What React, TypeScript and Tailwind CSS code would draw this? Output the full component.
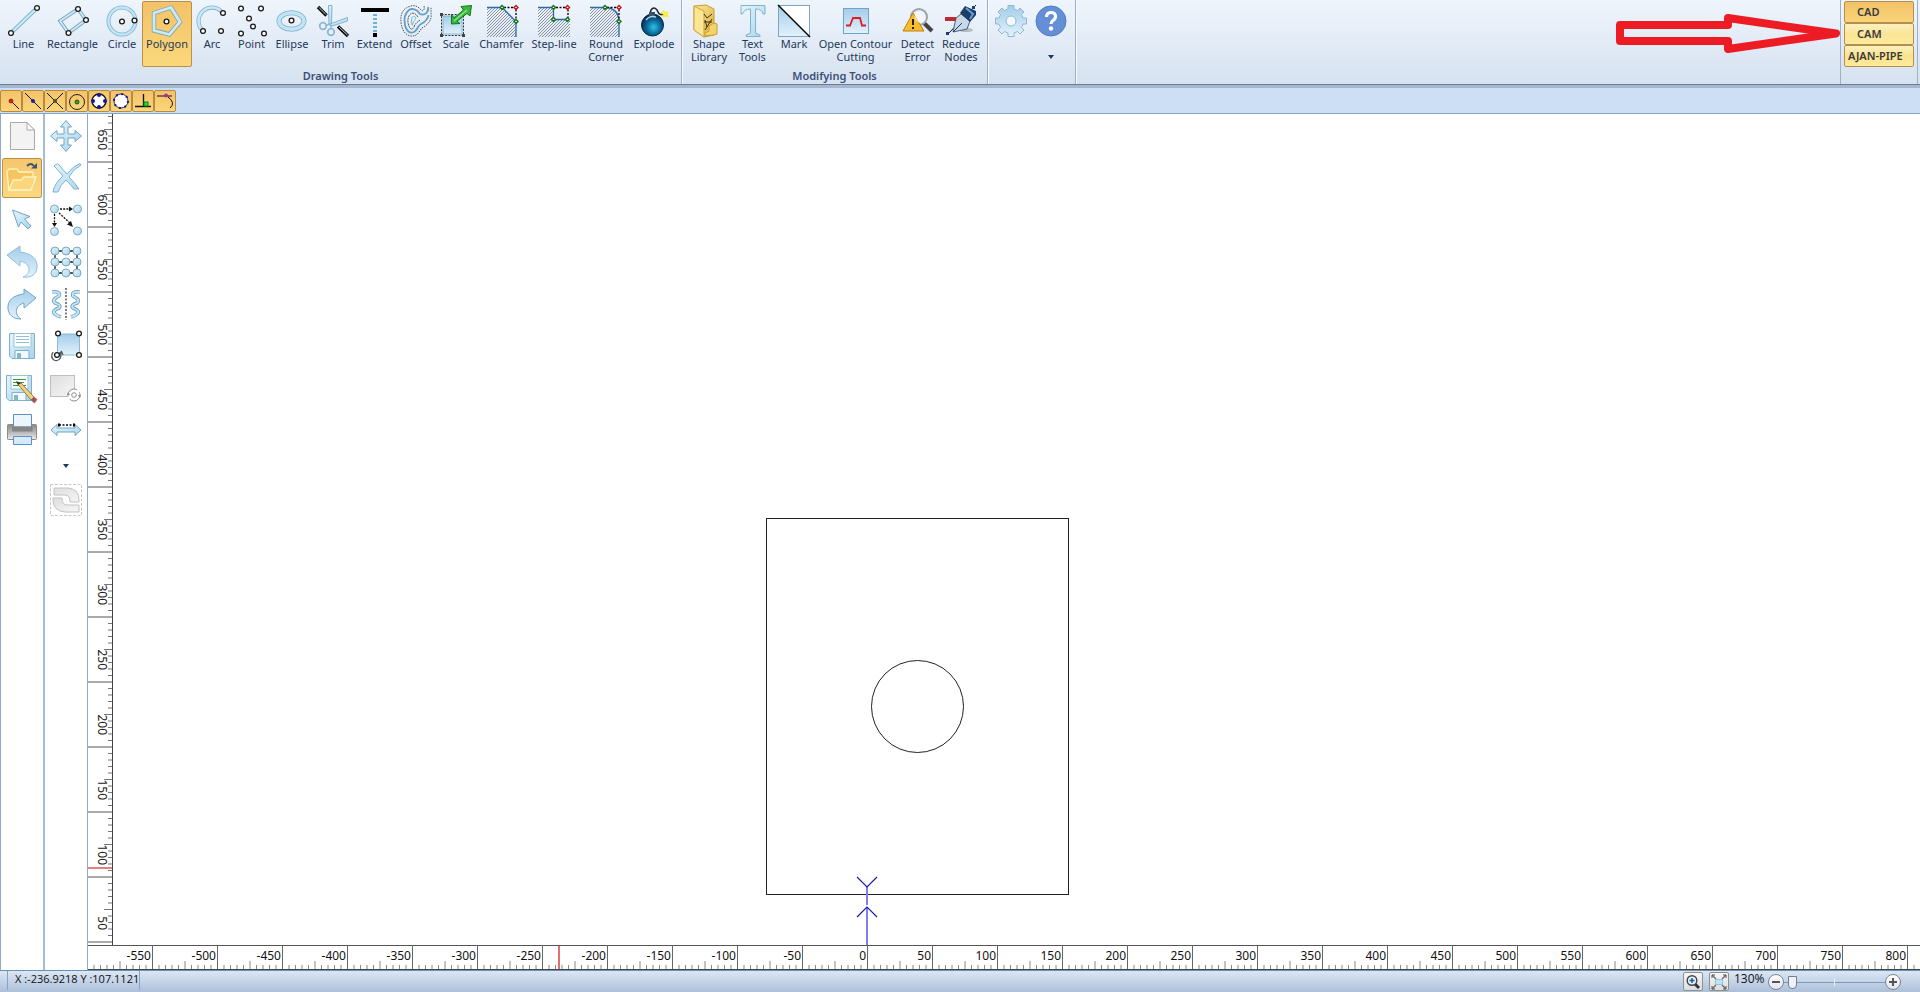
import React from "react";

type Kids = { children: React.ReactNode };

const EDGE = "#7fb4cf";
const BLUE = "url(#blue)";

function Icon({ children }: Kids) {
  return (
    <svg width="32" height="32" viewBox="0 0 32 32" fill="none" aria-hidden="true" className="block shrink-0 overflow-visible">
      {children}
    </svg>
  );
}

function Node({ x, y, r = 2.4 }: { x: number; y: number; r?: number }) {
  return <circle cx={x} cy={y} r={r} fill="#fff" stroke="#1a1a1a" strokeWidth="1.3" />;
}

function Dot({ x, y, color }: { x: number; y: number; color: string }) {
  return <path d={`M${x - 2} ${y}L${x} ${y - 2}L${x + 2} ${y}L${x} ${y + 2}Z`} fill="#fff" stroke={color} strokeWidth="1.4" />;
}

function Defs() {
  return (
    <svg width="0" height="0" className="absolute" aria-hidden="true">
      <defs>
        <linearGradient id="blue" x1="0" y1="0" x2="1" y2="1">
          <stop offset="0" stopColor="#e6f5fc" />
          <stop offset="1" stopColor="#a9d4ec" />
        </linearGradient>
        <linearGradient id="blueDown" x1="0" y1="0" x2="0" y2="1">
          <stop offset="0" stopColor="#a3cdea" />
          <stop offset="1" stopColor="#e2f2fb" />
        </linearGradient>
        <linearGradient id="gray" x1="0" y1="0" x2="1" y2="1">
          <stop offset="0" stopColor="#dedede" />
          <stop offset="1" stopColor="#f6f6f6" />
        </linearGradient>
        <linearGradient id="gold" x1="0" y1="0" x2="1" y2="1">
          <stop offset="0" stopColor="#fdeb9a" />
          <stop offset="1" stopColor="#dcae3c" />
        </linearGradient>
        <linearGradient id="metal" x1="0" y1="0" x2="0" y2="1">
          <stop offset="0" stopColor="#8a8a8a" />
          <stop offset="0.5" stopColor="#b5b5b5" />
          <stop offset="1" stopColor="#ececec" />
        </linearGradient>
        <radialGradient id="bomb" cx="0.55" cy="0.6" r="0.6">
          <stop offset="0" stopColor="#2fc3e6" />
          <stop offset="0.5" stopColor="#0b6e9e" />
          <stop offset="1" stopColor="#0a2346" />
        </radialGradient>
        <pattern id="hatch" width="3" height="3" patternUnits="userSpaceOnUse">
          <path d="M0 3L3 0M-1 1L1 -1M2 4L4 2" stroke="#5b6674" strokeWidth="0.7" />
        </pattern>
      </defs>
    </svg>
  );
}

const drawing = {
  line: (
    <Icon>
      <path d="M4 27L28 4" stroke={EDGE} strokeWidth="4" />
      <path d="M4 27L28 4" stroke="#cfe9f6" strokeWidth="2" />
      <Node x={3} y={28} /><Node x={29} y={3} />
    </Icon>
  ),
  rectangle: (
    <Icon>
      <path d="M21 4L29 15L11.500 28L3 16Z" stroke="#77a5bf" strokeWidth="3.600" />
      <path d="M21 4L29 15L11.500 28L3 16Z" stroke="#cfe9f6" strokeWidth="1.800" />
      <Node x={21} y={4} /><Node x={29} y={15} /><Node x={11.5} y={28} />
    </Icon>
  ),
  circle: (
    <Icon>
      <circle cx="16" cy="16" r="13.500" stroke={EDGE} strokeWidth="4" />
      <circle cx="16" cy="16" r="13.500" stroke="#c3e4f5" strokeWidth="2.400" />
      <Node x={16} y={16.5} /><Node x={28.5} y={15.5} />
    </Icon>
  ),
  polygon: (
    <Icon>
      <path d="M20 2.500L29 17L18.500 29.500L3 25.500V8Z" stroke="#7ba6ae" strokeWidth="4.400" />
      <path d="M20 2.500L29 17L18.500 29.500L3 25.500V8Z" stroke="#cdeaf3" strokeWidth="2.800" />
      <Node x={15.5} y={16.5} />
    </Icon>
  ),
  arc: (
    <Icon>
      <path d="M6 25A13 13 0 0 1 26 7" stroke={EDGE} strokeWidth="4.200" />
      <path d="M6 25A13 13 0 0 1 26 7" stroke="#c9e7f6" strokeWidth="2.600" />
      <Node x={27} y={8} /><Node x={7} y={26} /><Node x={25} y={26} />
    </Icon>
  ),
  point: (
    <Icon>
      <Node x={5} y={3.5} /><Node x={25} y={3.5} /><Node x={13} y={13.5} /><Node x={17} y={21.5} /><Node x={5} y={28.5} /><Node x={28} y={28.5} />
    </Icon>
  ),
  ellipse: (
    <Icon>
      <ellipse cx="15.500" cy="16" rx="12.500" ry="8.300" stroke={EDGE} strokeWidth="5" />
      <ellipse cx="15.500" cy="16" rx="12.500" ry="8.300" stroke="#c3e4f5" strokeWidth="3.400" />
      <Node x={15.5} y={15.5} />
    </Icon>
  ),
  trim: (
    <Icon>
      <path d="M1 2L9.500 10.500M21 21.500L31 31" stroke="#111" strokeWidth="3.400" />
      <path d="M2 2.500L9 9.500M22 22L30.500 30" stroke="#c9c9c9" strokeWidth="1" />
      <path d="M11.500 0.500H15L14.500 20H12Z" fill={BLUE} stroke={EDGE} />
      <path d="M30.500 12.500V16L15 21L13 19Z" fill={BLUE} stroke={EDGE} />
      <circle cx="6" cy="21" r="3.300" stroke="#8fbad2" strokeWidth="1.800" />
      <circle cx="14" cy="27" r="3.300" stroke="#8fbad2" strokeWidth="1.800" />
      <path d="M9.500 20.500L13 18.500L14.500 23" stroke="#8fbad2" strokeWidth="1.500" />
    </Icon>
  ),
  extend: (
    <Icon>
      <path d="M2 3H30V7H2Z" fill="#000" />
      <path d="M16 9V27" stroke="#6fb4d6" strokeWidth="4" strokeDasharray="2 2" />
      <path d="M14 28H18V32H14Z" fill="#000" />
    </Icon>
  ),
  offset: (
    <Icon>
      <path d="M24 1C25 5 23 7 21 5C18 1 14 0 11 1C3 3 0 9 1 17C2 26 6 31 12 31C18 31 19 26 22 23C27 20 32 16 31 9V2" stroke="#555" strokeDasharray="1.500 1" />
      <path d="M28 2C29 7 25 11 20 9C17 4 12 3 9 5C4 9 4 15 5 20C6 26 10 29 14 27C18 25 17 21 21 19C25 17 28 14 28.500 10" stroke="#5f9fca" strokeWidth="1.800" />
      <path d="M18 12C15 7 11 7 9 11C7 15 8 19 9 21C10 25 13 25 14 22C15 18 18 17 20 15" stroke="#555" strokeDasharray="2 0.700" />
      <path d="M16 13C14 10 12 11 11.500 15C11 20 12 22 13 18C13.500 16 15 15 16 13Z" stroke="#78b4d8" />
    </Icon>
  ),
  scale: (
    <Icon>
      <rect x="3" y="11" width="19" height="18" fill="url(#blueDown)" stroke="#7fb4d8" />
      <rect x="1.500" y="9.500" width="22" height="21" stroke="#333" strokeDasharray="2 1.300" />
      <path d="M0 8H3V11H0ZM0 29H3V32H0ZM22 29H25V32H22Z" fill="#444" />
      <path d="M31.500 0.500L30 11L27 8.500L17 16L20 18.500L11.500 19V9.500L14 13L23.500 5L21 1.500Z" fill="#37b93c" stroke="#14761b" />
      <path d="M14 16L27 5" stroke="#8fe58b" strokeWidth="1.300" />
    </Icon>
  ),
  chamfer: (
    <Icon>
      <path d="M1 3H16L30 17V32H1Z" fill="url(#hatch)" />
      <path d="M1 2.500H16L30 16.500V32" stroke="#2f68ae" strokeWidth="1.300" />
      <path d="M18 2.500H30V15" stroke="#000" strokeWidth="1.300" strokeDasharray="2 1.500" />
      <Dot x={16} y={2.5} color="#16711c" /><Dot x={30} y={16.5} color="#16711c" /><Dot x={30} y={2.5} color="#c8141c" />
    </Icon>
  ),
  step: (
    <Icon>
      <path d="M0 3H15V15H32V32H0Z" fill="url(#hatch)" />
      <path d="M0 2.500H15.500V14.500H30" stroke="#2f68ae" strokeWidth="1.300" />
      <path d="M18 2.500H30V14" stroke="#000" strokeWidth="1.300" strokeDasharray="2 1.500" />
      <Dot x={15.5} y={2.5} color="#16711c" /><Dot x={15.5} y={14.5} color="#16711c" /><Dot x={29.5} y={14.5} color="#16711c" /><Dot x={29.5} y={2.5} color="#c8141c" />
    </Icon>
  ),
  round: (
    <Icon>
      <path d="M0 3H15Q29 4 29 17V32H0Z" fill="url(#hatch)" />
      <path d="M0 2.500H15Q29 3 29 17V32" stroke="#2f68ae" strokeWidth="1.300" />
      <path d="M17 2.500H29V15" stroke="#000" strokeWidth="1.300" strokeDasharray="2 1.500" />
      <Dot x={15} y={2.5} color="#16711c" /><Dot x={29} y={16.5} color="#16711c" /><Dot x={29} y={2.5} color="#c8141c" />
    </Icon>
  ),
  explode: (
    <Icon>
      <path d="M12 9L13 5C16 1 19 4 20 7C21 10 24 10 26 9" stroke="#222" strokeWidth="1.500" />
      <circle cx="14.500" cy="20" r="11" fill="url(#bomb)" stroke="#0a2a4d" />
      <path d="M11 7H17V11H11Z" fill="#33506b" />
      <path d="M8 15Q12 10 18 12" stroke="#a8d5e8" strokeWidth="1.500" />
      <path d="M26 6L27.500 8L30 7L29 9.500L30 12L27.500 11L25 12L25.500 9.500L23.500 8Z" fill="#fff23a" stroke="#f6e92c" />
    </Icon>
  ),
};

const modifying = {
  shape: (
    <Icon>
      <path d="M1 1L13 0L21 4V30L11 32L1 25Z" fill="url(#gold)" stroke="#c79c35" />
      <path d="M1 1L11 6V32L1 25Z" fill="#fbe792" stroke="#cda53f" />
      <path d="M21 18L24 19V29L21 30L12 31V28L16 26V21Z" fill="#f3d36a" stroke="#c79c35" />
      <path d="M11 9L14 13L19 9M11 17H19M14 22L12 15M19 14L12 25" stroke="#3a2f12" />
    </Icon>
  ),
  text: (
    <Icon>
      <path d="M4 0.500H28V9H26Q25 4 18.500 4V28L23 30V31.500H9V30L13.500 28V4Q7 4 5.500 9H4Z" fill={BLUE} stroke={EDGE} />
    </Icon>
  ),
  mark: (
    <Icon>
      <rect x="0.500" y="0.500" width="31" height="31" fill="#fff" />
      <path d="M0.500 0.500L31.500 31.500H0.500Z" fill="url(#blueDown)" />
      <rect x="0.500" y="0.500" width="31" height="31" stroke="#7fa5c4" />
      <path d="M0 0L32 32" stroke="#000" strokeWidth="1.500" />
    </Icon>
  ),
  contour: (
    <Icon>
      <rect x="3.500" y="3.500" width="25" height="25" fill="url(#blueDown)" stroke="#6ba5cc" />
      <path d="M6 20.500H10L13 13H20L22 20.500H26" stroke="#e01b22" strokeWidth="1.800" />
    </Icon>
  ),
  detect: (
    <Icon>
      <path d="M22 18L30 26" stroke="#444" strokeWidth="4" />
      <circle cx="17" cy="12" r="8" fill="#e3ecf3" fillOpacity="0.800" stroke="#9ba4ad" strokeWidth="2" />
      <path d="M11 8L22 26H1Z" fill="#f9bd2c" stroke="#c47d12" strokeLinejoin="round" />
      <path d="M11 14V20M11 22V24" stroke="#222" strokeWidth="2" />
      <circle cx="18" cy="12" r="5.500" fill="#fff" fillOpacity="0.550" />
    </Icon>
  ),
  reduce: (
    <Icon>
      <path d="M2 30L31 0" stroke="#111" />
      <ellipse cx="21" cy="25" rx="7" ry="2" fill="#999" fillOpacity="0.600" />
      <path d="M16 9L25 16L22 24L8 27L11 13Z" fill="#c8d8e6" stroke="#46627c" />
      <path d="M8 27L17 18" stroke="#223d5c" />
      <path d="M15 8L20 1L31 6V10L25 17Z" fill="#1d3e66" />
      <path d="M21 3L28 9L25 14" stroke="#5aa4d8" strokeWidth="2" />
      <path d="M0 12H11V16H0Z" fill="#bd2a30" />
      <rect x="1" y="27" width="3" height="3" fill="#183c86" /><rect x="27" y="1" width="3" height="3" fill="#183c86" />
    </Icon>
  ),
};

const gear = (
  <Icon>
    <path
      d="M13 0.500H19V4L22.500 5.500L25 3L29 7L26.500 9.500L28 13H31.500V19H28L26.500 22.500L29 25L25 29L22.500 26.500L19 28V31.500H13V28L9.500 26.500L7 29L3 25L5.500 22.500L4 19H0.500V13H4L5.500 9.500L3 7L7 3L9.500 5.500L13 4Z"
      fill="url(#blueDown)" stroke="#8fb9d2" strokeLinejoin="round"
    />
    <circle cx="16" cy="16" r="5" fill="#f4f9fd" stroke="#8fb9d2" />
  </Icon>
);

const help = (
  <Icon>
    <circle cx="16" cy="16" r="15" fill="#648fd6" stroke="#4f7cc6" />
    <path d="M11.500 12Q11.500 7.500 16 7.500Q20.500 7.500 20.500 11.500Q20.500 14 18 15.500Q16 16.800 16 19" stroke="#fff" strokeWidth="3.200" />
    <circle cx="16" cy="23.500" r="2.200" fill="#fff" />
  </Icon>
);

function Tool({ icon, label, width, active, menu, name }: { icon: React.ReactNode; label?: string; width: string; active?: boolean; menu?: boolean; name?: string }) {
  return (
    <button
      type="button"
      aria-label={name}
      aria-pressed={active ? true : undefined}
      className={`${width} flex h-[66px] shrink-0 flex-col items-center rounded-[2px] border text-[11px] leading-[13px] text-[#1e395b] ${active ? "border-[#bf8f45] bg-linear-to-b from-[#f3c268] to-[#fbd87c]" : "border-transparent"}`}
    >
      <span className="mt-[3px] block">{icon}</span>
      {label && <span className="whitespace-pre-line text-center">{label}</span>}
      {menu && <svg width="6" height="4" viewBox="0 0 6 4" className="mt-[18px]" aria-hidden="true"><path d="M0 0H6L3 4Z" fill="#1e395b" /></svg>}
    </button>
  );
}

function Group({ title, children, pad }: Kids & { title?: string; pad: string }) {
  return (
    <section aria-label={title ?? "Options"} className="flex shrink-0 flex-col border-r border-[#9db0c8] shadow-[1px_0_0_#f7fbff]">
      <div className={`flex pt-px ${pad}`}>{children}</div>
      {title && <h2 className="text-center text-[11px] leading-[17px] font-semibold text-[#3c4f78]">{title}</h2>}
    </section>
  );
}

const modes = [
  { label: "CAD", pad: "pl-3", look: "bg-linear-to-b from-[#f2c268] to-[#fad57a]" },
  { label: "CAM", pad: "pl-3", look: "bg-linear-to-b from-[#fdf1c0] via-[#fae596] to-[#fcec9c]" },
  { label: "AJAN-PIPE", pad: "pl-[3px]", look: "bg-linear-to-b from-[#fdf1c0] via-[#fae28c] to-[#fcec9c]" },
];

function Ribbon() {
  return (
    <header className="flex h-[85px] shrink-0 border-b border-[#6f7d92] bg-linear-to-b from-[#eff5fc] to-[#d6e2f0]">
      <Group title="Drawing Tools" pad="px-1">
        <Tool icon={drawing.line} label="Line" width="w-[39px]" />
        <Tool icon={drawing.rectangle} label="Rectangle" width="w-[59px]" />
        <Tool icon={drawing.circle} label="Circle" width="w-[40px]" />
        <Tool icon={drawing.polygon} label="Polygon" width="w-[50px]" active />
        <Tool icon={drawing.arc} label="Arc" width="w-[40px]" />
        <Tool icon={drawing.point} label="Point" width="w-[39px]" />
        <Tool icon={drawing.ellipse} label="Ellipse" width="w-[42px]" />
        <Tool icon={drawing.trim} label="Trim" width="w-[40px]" />
        <Tool icon={drawing.extend} label="Extend" width="w-[43px]" />
        <Tool icon={drawing.offset} label="Offset" width="w-[40px]" />
        <Tool icon={drawing.scale} label="Scale" width="w-[40px]" />
        <Tool icon={drawing.chamfer} label="Chamfer" width="w-[51px]" />
        <Tool icon={drawing.step} label="Step-line" width="w-[54px]" />
        <Tool icon={drawing.round} label={"Round\nCorner"} width="w-[50px]" />
        <Tool icon={drawing.explode} label="Explode" width="w-[46px]" />
      </Group>
      <Group title="Modifying Tools" pad="pl-[5px] pr-[3px]">
        <Tool icon={modifying.shape} label={"Shape\nLibrary"} width="w-[44px]" />
        <Tool icon={modifying.text} label={"Text\nTools"} width="w-[43px]" />
        <Tool icon={modifying.mark} label="Mark" width="w-[40px]" />
        <Tool icon={modifying.contour} label={"Open Contour\nCutting"} width="w-[83px]" />
        <Tool icon={modifying.detect} label={"Detect\nError"} width="w-[41px]" />
        <Tool icon={modifying.reduce} label={"Reduce\nNodes"} width="w-[46px]" />
      </Group>
      <Group pad="pl-[3px] pr-1">
        <Tool icon={gear} name="Settings" width="w-[40px]" />
        <Tool icon={help} name="Help" width="w-[40px]" menu />
      </Group>
      <svg width="226" height="68" viewBox="0 0 226 68" fill="none" className="ml-auto shrink-0" aria-hidden="true">
        <path d="M6 25H114V18L222 33.500L114 49V41H6Z" stroke="#ed1c24" strokeWidth="8" strokeLinejoin="round" />
      </svg>
      <nav aria-label="Mode" className="mr-[2px] flex w-[78px] shrink-0 flex-col border-x border-[#9db0c8] px-[3px] pt-px">
        {modes.map((m) => (
          <button key={m.label} type="button" className={`${m.pad} ${m.look} h-[22px] rounded-[2px] border border-[#b98d4c] text-left text-[11px] leading-5 font-semibold whitespace-nowrap text-[#3a3a3a]`}>
            {m.label}
          </button>
        ))}
      </nav>
    </header>
  );
}

const snaps: { name: string; art: React.ReactNode }[] = [
  { name: "End point", art: <><path d="M10 10L18 18" stroke="#111" /><circle cx="10" cy="10" r="2" fill="#d8201c" stroke="#701" strokeWidth="0.600" /></> },
  { name: "Mid point", art: <><path d="M2 2L18 18" stroke="#111" /><circle cx="10" cy="10" r="2" fill="#1a1f9c" /></> },
  { name: "Intersection", art: <><path d="M2 2L18 18M18 2L2 18" stroke="#111" /><circle cx="10" cy="10" r="2" fill="#4b5a10" /></> },
  { name: "Center", art: <><circle cx="10" cy="11" r="7.500" stroke="#222" /><circle cx="10" cy="11" r="2" fill="#17b52b" stroke="#111" strokeWidth="0.700" /></> },
  {
    name: "Quadrant",
    art: <>
      <circle cx="10" cy="10" r="7" fill="#fff" stroke="#111" strokeWidth="1.300" />
      <circle cx="10" cy="4" r="2" fill="#1216a8" /><circle cx="10" cy="16" r="2" fill="#1216a8" /><circle cx="4" cy="10" r="2" fill="#1216a8" /><circle cx="16" cy="10" r="2" fill="#1216a8" />
    </>,
  },
  { name: "On circle", art: <><circle cx="10" cy="10" r="7" fill="#fff" stroke="#333" /><circle cx="10" cy="10" r="7" stroke="#1216a8" strokeWidth="2" strokeDasharray="2 3.500" /></> },
  { name: "Perpendicular", art: <><path d="M2 15.500H18M10.500 3V15" stroke="#111" strokeWidth="1.300" /><rect x="11" y="11" width="4" height="4" fill="#25e035" stroke="#0a7a16" /></> },
  { name: "Tangent", art: <><path d="M2 5H17M13 6Q21 12 15 17" stroke="#111" /><circle cx="11" cy="4.500" r="2" fill="#b52a9a" /></> },
];

function SnapBar() {
  return (
    <div role="toolbar" aria-label="Snaps" className="flex h-[29px] shrink-0 border-t-[3px] border-b border-t-[#a5b6cf] border-b-[#87a5c6] bg-[#cddff5] pt-[2px]">
      {snaps.map((s) => (
        <button key={s.name} type="button" aria-label={s.name} aria-pressed className="flex size-[22px] items-center justify-center rounded-[2px] border border-[#b98842] bg-linear-to-b from-[#f4c368] to-[#fbd67a]">
          <svg width="20" height="20" viewBox="0 0 20 20" fill="none" aria-hidden="true">{s.art}</svg>
        </button>
      ))}
    </div>
  );
}

const floppy = (
  <>
    <path d="M3.500 3.500H28.500V28.500H6L3.500 26Z" fill={BLUE} stroke="#7fb0cc" />
    <path d="M8 3.500H25V17H8Z" fill="#fff" stroke="#9fc4d8" />
    <path d="M9 20.500H23V28.500H9Z" fill="#f2f8fb" stroke="#7fb0cc" />
    <path d="M11 23H15V28H11Z" fill="#86b7c8" />
  </>
);

const fileTools: { name: string; active?: boolean; art: React.ReactNode }[] = [
  { name: "New", art: <><path d="M4.500 2.500H21L28.500 10V29.500H4.500Z" fill="#f3f3f3" stroke="#a9a9a9" /><path d="M21 2.500V10H28.500Z" fill="#fff" stroke="#a9a9a9" /></> },
  {
    name: "Open", active: true,
    art: <>
      <path d="M1 10L3 7H11L13 10H27V15L23 28H3Z" fill="#f6c55f" stroke="#fff2c4" strokeWidth="1.300" />
      <path d="M3 28L7 18H15L18 15H30L25 28Z" fill="#fbd77b" stroke="#fff2c4" strokeWidth="1.300" />
      <path d="M21 4Q25 0 28 4" stroke="#3a5470" strokeWidth="1.800" /><path d="M25 6.500H31V1Z" fill="#3a5470" />
    </>,
  },
  { name: "Select", art: <path d="M6.500 6L24 12.500L18.500 15L25 22L22 25L15 18L12.500 23Z" fill={BLUE} stroke="#6fa6c6" /> },
  { name: "Undo", art: <path d="M1 9L14 0V6C26 7 32 14 31 22C30 28 26 32 17 31C26 28 25 17 14 15V20Z" fill="url(#blueDown)" stroke="#8fc1de" /> },
  { name: "Redo", art: <path d="M30 10L18 1V6C7 7 1 13 2 21C3 27 7 31 15 31C8 27 9 17 18 15V20Z" fill="url(#blueDown)" stroke="#6fa6c6" /> },
  { name: "Save", art: <>{floppy}<path d="M10 6.500H23M10 9.500H23M10 12.500H23" stroke="#8fbfe0" /></> },
  {
    name: "Save as",
    art: <>
      <g transform="translate(-3 0)">{floppy}</g>
      <path d="M7 7.500H20M7 10.500H18M7 13.500H20" stroke="#2f9e3a" strokeWidth="1.200" />
      <path d="M11 11L15 11L28 25L25 28Z" fill="#f3d27a" stroke="#8a7335" strokeWidth="0.900" />
      <path d="M25 28L28 25L31 27.500L28.500 31Z" fill="#b9474e" stroke="#777" strokeWidth="0.800" /><path d="M10 9L15 11L12 13Z" fill="#333" />
    </>,
  },
  {
    name: "Print",
    art: <>
      <rect x="1.500" y="10.500" width="29" height="15" rx="1" fill="url(#metal)" stroke="#8a8a8a" />
      <path d="M7.500 0.500H25.500V13H7.500Z" fill="#eaf5fd" stroke="#5d8fc0" /><path d="M6 12.500H26.500V17.500H6Z" fill="#858585" />
      <path d="M7.500 22.500H25.500V30.500H7.500Z" fill="#d5eafa" stroke="#5d8fc0" />
    </>,
  },
];

function Ball({ x, y }: { x: number; y: number }) {
  return <circle cx={x} cy={y} r="4" fill={BLUE} stroke="#7aa9c6" />;
}

const editTools: { name: string; menu?: boolean; art: React.ReactNode }[] = [
  { name: "Move", art: <path d="M16 0.500L21.500 7H18V14H25V10.500L31.500 16L25 21.500V18H18V25H21.500L16 31.500L10.500 25H14V18H7V21.500L0.500 16L7 10.500V14H14V7H10.500Z" fill={BLUE} stroke="#6fa6c6" /> },
  { name: "Delete", art: <path d="M4 4Q8 0 10 4Q14 9 17 12Q23 4 30 1.500L31 3Q23 7 19 15Q25 21 29 27L24 27Q20 22 16 18Q10 23 8 30H3Q4 22 13 14Q8 8 4 4Z" fill={BLUE} stroke="#7db3d3" /> },
  {
    name: "Copy",
    art: <>
      <path d="M10 5H20M4.500 10V20M9 9L20 19" stroke="#111" strokeWidth="1.300" strokeDasharray="2 1.200" />
      <path d="M19 2.500L23 5L19 7.500ZM2 19H7L4.500 23ZM21 17L23 23L17 20.500Z" fill="#111" />
      <Ball x={4.5} y={5} /><Ball x={27.5} y={5} /><Ball x={4.5} y={27.5} /><Ball x={27.5} y={27} />
    </>,
  },
  {
    name: "Array",
    art: <>
      <path d="M5 5H27V27H5ZM5 16H27" stroke="#111" strokeWidth="1.300" />
      {[5, 16, 27].map((y) => [5, 16, 27].map((x) => <Ball key={`${x}-${y}`} x={x} y={y} />))}
    </>,
  },
  {
    name: "Mirror",
    art: <>
      <path d="M16 0V32" stroke="#000" strokeDasharray="2 1.500" />
      <path d="M2 4Q11 3 9 8Q1 12 5 15Q12 17 9 20Q1 23 5 26Q7 28 11 29M30 4Q21 3 23 8Q31 12 27 15Q20 17 23 20Q31 23 27 26Q25 28 21 29" stroke="#6fa6c6" strokeWidth="3.600" />
      <path d="M2 4Q11 3 9 8Q1 12 5 15Q12 17 9 20Q1 23 5 26Q7 28 11 29M30 4Q21 3 23 8Q31 12 27 15Q20 17 23 20Q31 23 27 26Q25 28 21 29" stroke="#cae6f6" strokeWidth="1.800" />
    </>,
  },
  {
    name: "Rotate",
    art: <>
      <rect x="7.500" y="4" width="22" height="21" fill="url(#blueDown)" stroke="#8fb8d6" />
      <path d="M3 22Q0 27 4 30Q8 32 10.500 28L11 23M8.500 24L11.500 21.500L13 25" stroke="#555" strokeWidth="1.300" />
      <Node x={8} y={3.5} /><Node x={29} y={3.5} /><Node x={7} y={25} /><Node x={29} y={25} />
    </>,
  },
  {
    name: "Rotate free",
    art: <>
      <rect x="0.500" y="3.500" width="24" height="21" fill="url(#gray)" stroke="#bdbdbd" />
      <circle cx="24" cy="23" r="6" fill="#fff" stroke="#8c8c8c" strokeDasharray="14 3" /><circle cx="24" cy="23" r="2.300" stroke="#8c8c8c" /><path d="M17 23H20L18 20ZM31 23H28L30 26Z" fill="#8c8c8c" />
    </>,
  },
  {
    name: "Measure", menu: true,
    art: <>
      <path d="M1 16L7 10.500V14H25V10.500L31 16L25 21.500V18H7V21.500Z" fill={BLUE} stroke="#6fa6c6" />
      <path d="M9 11H24" stroke="#000" strokeWidth="1.500" strokeDasharray="2 1.500" /><path d="M8 9.500H10V12.500H8ZM23 9.500H25V12.500H23Z" fill="#000" />
    </>,
  },
  {
    name: "Join",
    art: <>
      <rect x="0.500" y="0.500" width="31" height="31" stroke="#c9c9c9" strokeDasharray="3 1.500" />
      <path d="M4 4H18Q29 5 29 16V18H20Q20 11 15 11H4Z" fill="url(#gray)" stroke="#c2c2c2" />
      <path d="M3 14H12Q12 21 17 21H29V28H15Q3 27 3 16Z" fill="url(#gray)" stroke="#c2c2c2" />
    </>,
  },
];

function SideBars() {
  return (
    <>
      <div role="toolbar" aria-label="File" className="flex w-[45px] shrink-0 flex-col items-center gap-[2px] border-r-2 border-l border-r-[#a3bcd8] border-l-[#8fabca] bg-white pt-[2px]">
        {fileTools.map((t) => (
          <button key={t.name} type="button" aria-label={t.name} className={`flex size-10 items-center justify-center rounded-[2px] border ${t.active ? "border-[#c09045] bg-linear-to-b from-[#f5c76c] to-[#fbd980]" : "border-transparent"}`}>
            <Icon>{t.art}</Icon>
          </button>
        ))}
      </div>
      <div role="toolbar" aria-label="Edit" className="flex w-[43px] shrink-0 flex-col items-center gap-[2px] border-r border-[#8fabca] bg-white pt-[2px]">
        {editTools.map((t) => (
          <button key={t.name} type="button" aria-label={t.name} className="flex min-h-10 w-10 flex-col items-center pt-1">
            <Icon>{t.art}</Icon>
            {t.menu && <svg width="6" height="4" viewBox="0 0 6 4" className="mt-[18px] mb-[10px]" aria-hidden="true"><path d="M0 0H6L3 4Z" fill="#1e395b" /></svg>}
          </button>
        ))}
      </div>
    </>
  );
}

const STEP = 6.5;
const range = (from: number, to: number) => Array.from({ length: to - from + 1 }, (_, i) => from + i);

function VerticalRuler() {
  return (
    <svg className="w-[25px] shrink-0 overflow-hidden" height="100%" aria-label="Vertical ruler">
      {range(-10, 127).map((i) => {
        const y = 828 - i * STEP;
        const start = i % 10 === 0 ? 0 : i % 5 === 0 ? 16 : 20;
        return <path key={i} d={`M${start} ${y}H24`} stroke={i % 10 === 0 ? "#555" : "#777"} strokeWidth="1" />;
      })}
      {range(0, 12).map((n) => {
        const y = 816 - n * 65;
        return (
          <text key={n} transform={`translate(10 ${y}) rotate(90)`} textAnchor="end" fontSize="12" fill="#222">{(n + 1) * 50}</text>
        );
      })}
      <path d="M0 754H24" stroke="#e58080" strokeWidth="2" />
      <path d="M24.500 0V4000" stroke="#444" />
    </svg>
  );
}

function HorizontalRuler() {
  return (
    <svg className="h-[25px] w-full shrink-0" aria-label="Horizontal ruler">
      <path d="M0 0.500H9000" stroke="#555" />
      {range(-119, 500).map((i) => {
        const x = 779.5 + i * STEP;
        const start = i % 10 === 0 ? 0 : i % 5 === 0 ? 16 : 20;
        return <path key={i} d={`M${x} ${start}V24`} stroke={i % 10 === 0 ? "#666" : "#888"} strokeWidth="1" />;
      })}
      {range(-11, 16).map((n) => (
        <text key={n} x={778 + n * 65} y="15" textAnchor="end" fontSize="12" fill="#111">{n * 50}</text>
      ))}
      <path d="M471 1V24" stroke="#e86c6c" strokeWidth="2" />
      <path d="M0 24.500H9000" stroke="#444" />
    </svg>
  );
}

function Canvas() {
  return (
    <svg className="min-w-0 flex-1" height="100%" fill="none" aria-label="Drawing canvas">
      <rect x="653.500" y="404.500" width="302" height="376" stroke="#222" />
      <circle cx="804.500" cy="592.500" r="46" stroke="#222" />
      <path d="M754 773V791M754 794V832" stroke="#7f7ff0" strokeWidth="2" />
      <path d="M744 763L754 773L764 763M744 803L754 793L764 803" stroke="#1818b8" strokeWidth="1.200" />
    </svg>
  );
}

const roundButton = "flex size-4 items-center justify-center rounded-full border border-[#7b8594] bg-linear-to-b from-white to-[#dfe5ec]";
const squareButton = "flex h-[19px] w-5 items-center justify-center rounded-[2px] border border-[#8e8f8f] bg-linear-to-b from-[#f6f6f6] to-[#dcdcdc]";

function StatusBar() {
  return (
    <footer className="flex h-[22px] shrink-0 items-start border-t border-[#6f8eb3] bg-linear-to-b from-[#dbe7f5] to-[#adc0d9] text-[11px] leading-[15px] text-[#111]">
      <div className="ml-[7px] h-[19px] w-[133px] border-x border-[#8fa3bd] pl-[7px] font-['Open_Sans',sans-serif] whitespace-nowrap">X :-236.9218 Y :107.1121</div>
      <div className="mr-[19px] ml-auto flex items-start pt-px">
        <button type="button" aria-label="Zoom in on area" className={squareButton}>
          <svg width="16" height="16" viewBox="0 0 16 16" fill="none" aria-hidden="true"><path d="M10 10L14 14" stroke="#333" strokeWidth="3" /><circle cx="7" cy="6.500" r="4.800" fill="#e3f1fb" stroke="#444" strokeWidth="1.400" /><path d="M7 4V9M4.500 6.500H9.500" stroke="#1b55a8" strokeWidth="1.500" /></svg>
        </button>
        <button type="button" aria-label="Fit to screen" className={`ml-[6px] ${squareButton}`}>
          <svg width="16" height="16" viewBox="0 0 16 16" fill="none" aria-hidden="true"><path d="M1 1L5 5M15 1L11 5M1 15L5 11M15 15L11 11" stroke="#666" strokeWidth="1.300" /><path d="M1 4V1H4M12 1H15V4M1 12V15H4M12 15H15V12" stroke="#555" /><rect x="4.500" y="5.500" width="7" height="5" fill="#bfe3f5" stroke="#8fc4df" /></svg>
        </button>
        <label htmlFor="zoom" className="ml-[5px] w-[34px] font-['Open_Sans',sans-serif] text-[12px] leading-[13px]">130%</label>
        <button type="button" aria-label="Zoom out" className={`mt-[2px] ${roundButton}`}>
          <svg width="8" height="8" viewBox="0 0 8 8" aria-hidden="true"><path d="M0 4H8" stroke="#555" strokeWidth="2" /></svg>
        </button>
        <input
          id="zoom" type="range" min="0" max="100" defaultValue="4"
          className="mt-[3px] h-[14px] w-[101px] appearance-none bg-[linear-gradient(#e8eff7,#e8eff7),linear-gradient(#7f99b8,#7f99b8)] bg-[length:1px_8px,100%_1px] bg-center bg-no-repeat [&::-webkit-slider-thumb]:h-[13px] [&::-webkit-slider-thumb]:w-[9px] [&::-webkit-slider-thumb]:appearance-none [&::-webkit-slider-thumb]:rounded-b-[4px] [&::-webkit-slider-thumb]:border [&::-webkit-slider-thumb]:border-[#6f7f94] [&::-webkit-slider-thumb]:bg-[#eef2f7]"
        />
        <button type="button" aria-label="Zoom in" className={`mt-[2px] ${roundButton}`}>
          <svg width="8" height="8" viewBox="0 0 8 8" aria-hidden="true"><path d="M0 4H8M4 0V8" stroke="#555" strokeWidth="2" /></svg>
        </button>
      </div>
    </footer>
  );
}

export default function App() {
  return (
    <div className="flex h-screen min-h-[600px] flex-col overflow-hidden bg-white font-['Noto_Sans',sans-serif]">
      <Defs />
      <Ribbon />
      <SnapBar />
      <div className="flex min-h-0 flex-1">
        <SideBars />
        <main className="flex min-w-0 flex-1 flex-col">
          <div className="flex min-h-0 flex-1"><VerticalRuler /><Canvas /></div>
          <HorizontalRuler />
        </main>
      </div>
      <StatusBar />
    </div>
  );
}
